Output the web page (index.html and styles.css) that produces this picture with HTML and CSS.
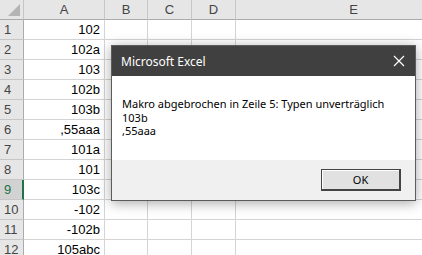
FILE: index.html
```html
<!DOCTYPE html>
<html lang="de">
<head>
    <meta charset="UTF-8">
    <meta name="viewport" content="width=device-width, initial-scale=1.0">
    <title>Excel – Makro abgebrochen</title>
    <link rel="stylesheet" href="styles.css">
</head>
<body>

<!-- Tabellenblatt -->
<div class="sheet">
    <div class="corner"><span class="triangle"></span></div>
    <div class="col-head">A</div>
    <div class="col-head">B</div>
    <div class="col-head">C</div>
    <div class="col-head">D</div>
    <div class="col-head">E</div>

    <div class="row-head">1</div><div class="cell">102</div><div class="cell"></div><div class="cell"></div><div class="cell"></div><div class="cell"></div>
    <div class="row-head">2</div><div class="cell">102a</div><div class="cell"></div><div class="cell"></div><div class="cell"></div><div class="cell"></div>
    <div class="row-head">3</div><div class="cell">103</div><div class="cell"></div><div class="cell"></div><div class="cell"></div><div class="cell"></div>
    <div class="row-head">4</div><div class="cell">102b</div><div class="cell"></div><div class="cell"></div><div class="cell"></div><div class="cell"></div>
    <div class="row-head">5</div><div class="cell">103b</div><div class="cell"></div><div class="cell"></div><div class="cell"></div><div class="cell"></div>
    <div class="row-head">6</div><div class="cell">,55aaa</div><div class="cell"></div><div class="cell"></div><div class="cell"></div><div class="cell"></div>
    <div class="row-head">7</div><div class="cell">101a</div><div class="cell"></div><div class="cell"></div><div class="cell"></div><div class="cell"></div>
    <div class="row-head">8</div><div class="cell">101</div><div class="cell"></div><div class="cell"></div><div class="cell"></div><div class="cell"></div>
    <div class="row-head active">9</div><div class="cell">103c</div><div class="cell"></div><div class="cell"></div><div class="cell"></div><div class="cell"></div>
    <div class="row-head">10</div><div class="cell">-102</div><div class="cell"></div><div class="cell"></div><div class="cell"></div><div class="cell"></div>
    <div class="row-head">11</div><div class="cell">-102b</div><div class="cell"></div><div class="cell"></div><div class="cell"></div><div class="cell"></div>
    <div class="row-head">12</div><div class="cell">105abc</div><div class="cell"></div><div class="cell"></div><div class="cell"></div><div class="cell"></div>
</div>

<!-- Meldungsfenster -->
<div class="dialog">
    <div class="dialog-title">
        <span>Microsoft Excel</span>
        <svg class="close" width="12" height="12" viewBox="0 0 12 12">
            <path d="M1 1 L11 11 M11 1 L1 11" stroke="#fff" stroke-width="1.2" fill="none"/>
        </svg>
    </div>
    <div class="dialog-body">
        Makro abgebrochen in Zeile 5: Typen unverträglich<br>
        103b<br>
        ,55aaa
    </div>
    <div class="dialog-footer">
        <button class="btn-ok">OK</button>
    </div>
</div>

</body>
</html>
```

FILE: styles.css
```css
body {
    margin: 0;
    background-color: #fff;
    overflow: hidden;
    position: relative;
    width: 422px;
    height: 255px;
}

/* Tabellenblatt */
.sheet {
    display: grid;
    grid-template-columns: 24px 81px 43px 44px 44px 236px;
    grid-auto-rows: 20px;
    width: 422px;
    height: 255px;
    overflow: hidden;
    font-family: "Liberation Sans", Arial, sans-serif;
    font-size: 13px;
    color: #000;
}
.corner,
.col-head,
.row-head {
    background-color: #e6e6e6;
    border-right: 1px solid #c6c6c6;
    border-bottom: 1px solid #c6c6c6;
    color: #444;
    box-sizing: border-box;
}
.corner {
    position: relative;
    border-bottom-color: #ababab;
}
.triangle {
    position: absolute;
    right: 3px;
    bottom: 3px;
    width: 0;
    height: 0;
    border-left: 12px solid transparent;
    border-bottom: 12px solid #b4b4b4;
}
.col-head {
    border-bottom-color: #ababab;
    display: flex;
    align-items: center;
    justify-content: center;
}
.row-head {
    display: flex;
    align-items: center;
    padding-left: 4px;
    border-right-color: #ababab;
}
.row-head.active {
    background-color: #d2d2d2;
    color: #217346;
    border-right: 2px solid #217346;
}
.cell {
    border-right: 1px solid #d4d4d4;
    border-bottom: 1px solid #d4d4d4;
    box-sizing: border-box;
    display: flex;
    align-items: center;
    justify-content: flex-end;
    padding-right: 4px;
    white-space: nowrap;
}

/* Meldungsfenster */
.dialog {
    position: absolute;
    left: 111px;
    top: 45px;
    width: 305px;
    height: 156px;
    box-sizing: border-box;
    border: 1px solid #5c5c5c;
    background-color: #fff;
    box-shadow: 0 2px 12px rgba(0, 0, 0, 0.35);
    display: flex;
    flex-direction: column;
    font-family: "Noto Sans", sans-serif;
}
.dialog-title {
    height: 30px;
    background-color: #404040;
    color: #fff;
    display: flex;
    align-items: center;
    justify-content: space-between;
    padding: 0 10px 0 9px;
    font-size: 12px;
}
.dialog-body {
    flex: 1;
    padding: 21px 0 0 10px;
    font-size: 11px;
    line-height: 13.5px;
    color: #000;
}
.dialog-footer {
    height: 40px;
    background-color: #f0f0f0;
    display: flex;
    justify-content: flex-end;
    align-items: center;
    padding-right: 14px;
}
.btn-ok {
    width: 80px;
    height: 22px;
    font-family: "Noto Sans", sans-serif;
    font-size: 11px;
    background-color: #e1e1e1;
    border: 1px solid #444;
    border-right-width: 2px;
    border-bottom-width: 2px;
    box-shadow: inset 1px 1px 0 #fff;
    padding: 0;
    color: #000;
}
```
